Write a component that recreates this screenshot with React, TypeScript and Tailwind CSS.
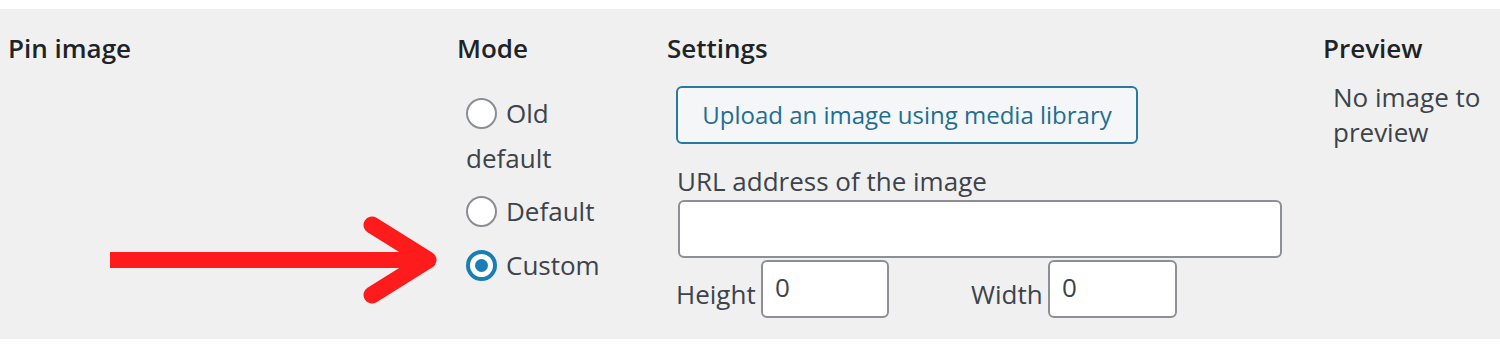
import React from "react";

const font = { fontFamily: '"Open Sans", "Noto Sans", sans-serif' };

function Radio({ checked }: { checked?: boolean }) {
  if (checked) {
    return (
      <span className="inline-flex h-[31px] w-[31px] shrink-0 items-center justify-center rounded-full border-[4px] border-[#1b7db6] bg-white">
        <span className="h-[13px] w-[13px] rounded-full bg-[#1b7db6]" />
      </span>
    );
  }
  return <span className="inline-block h-[31px] w-[31px] shrink-0 rounded-full border-2 border-[#8a8d92] bg-white" />;
}

function Arrow() {
  return (
    <svg className="absolute left-[110px] top-[203px]" width="332" height="96" viewBox="0 0 332 96">
      <path d="M0 48 H312" stroke="#fe1b1b" strokeWidth="16" />
      <path d="M262 13 L318 48 L262 83" stroke="#fe1b1b" strokeWidth="17" fill="none" strokeLinecap="round" strokeLinejoin="round" />
    </svg>
  );
}

export default function App() {
  return (
    <div className="bg-white pt-[9px] pb-[11px]" style={font}>
      <div className="relative flex h-[330px] bg-[#f0f0f0] text-[26px] text-[#3c434a]">
        <Arrow />
        <div className="w-[457px] shrink-0 pl-2 pt-[21px]">
          <h3 className="font-semibold leading-[36px] text-[#1d2327]">Pin image</h3>
        </div>

        <div className="w-[210px] shrink-0 pt-[21px]">
          <h3 className="font-semibold leading-[36px] text-[#1d2327]">Mode</h3>
          <div className="pl-[9px]">
            <label className="mt-[27px] flex h-[40px] items-center gap-[9px]">
              <Radio /> Old
            </label>
            <div className="mt-[5px] flex h-[40px] items-center">default</div>
            <label className="mt-[13px] flex h-[40px] items-center gap-[9px]">
              <Radio /> Default
            </label>
            <label className="mt-[14px] flex h-[40px] items-center gap-[9px]">
              <Radio checked /> Custom
            </label>
          </div>
        </div>

        <div className="w-[656px] shrink-0 pt-[21px]">
          <h3 className="font-semibold leading-[36px] text-[#1d2327]">Settings</h3>
          <div className="pl-[9px]">
            <button className="mt-[20px] h-[58px] w-[462px] rounded-[6px] border-2 border-[#2679a0] bg-[#f4f6f7] text-[24px] text-[#1e6e93]">
              Upload an image using media library
            </button>
            <div className="mt-[19px] pl-[1px] leading-[36px]">URL address of the image</div>
            <div className="ml-[2px] mt-[1px] h-[58px] w-[604px] rounded-[6px] border-2 border-[#8c8f94] bg-white" />
            <div className="mt-[2px] flex items-end">
              <span className="mb-[6px] w-[85px] leading-[36px]">Height</span>
              <div className="h-[58px] w-[128px] rounded-[6px] border-2 border-[#8c8f94] bg-white pl-[12px] pt-[9px] leading-[32px]">0</div>
              <span className="mb-[6px] ml-[82px] w-[77px] leading-[36px]">Width</span>
              <div className="h-[58px] w-[129px] rounded-[6px] border-2 border-[#8c8f94] bg-white pl-[12px] pt-[9px] leading-[32px]">0</div>
            </div>
          </div>
        </div>

        <div className="flex-1 pt-[21px]">
          <h3 className="font-semibold leading-[36px] text-[#1d2327]">Preview</h3>
          <p className="mt-[14px] pl-[10px] leading-[35px]">
            No image to
            <br />
            preview
          </p>
        </div>
      </div>
    </div>
  );
}
